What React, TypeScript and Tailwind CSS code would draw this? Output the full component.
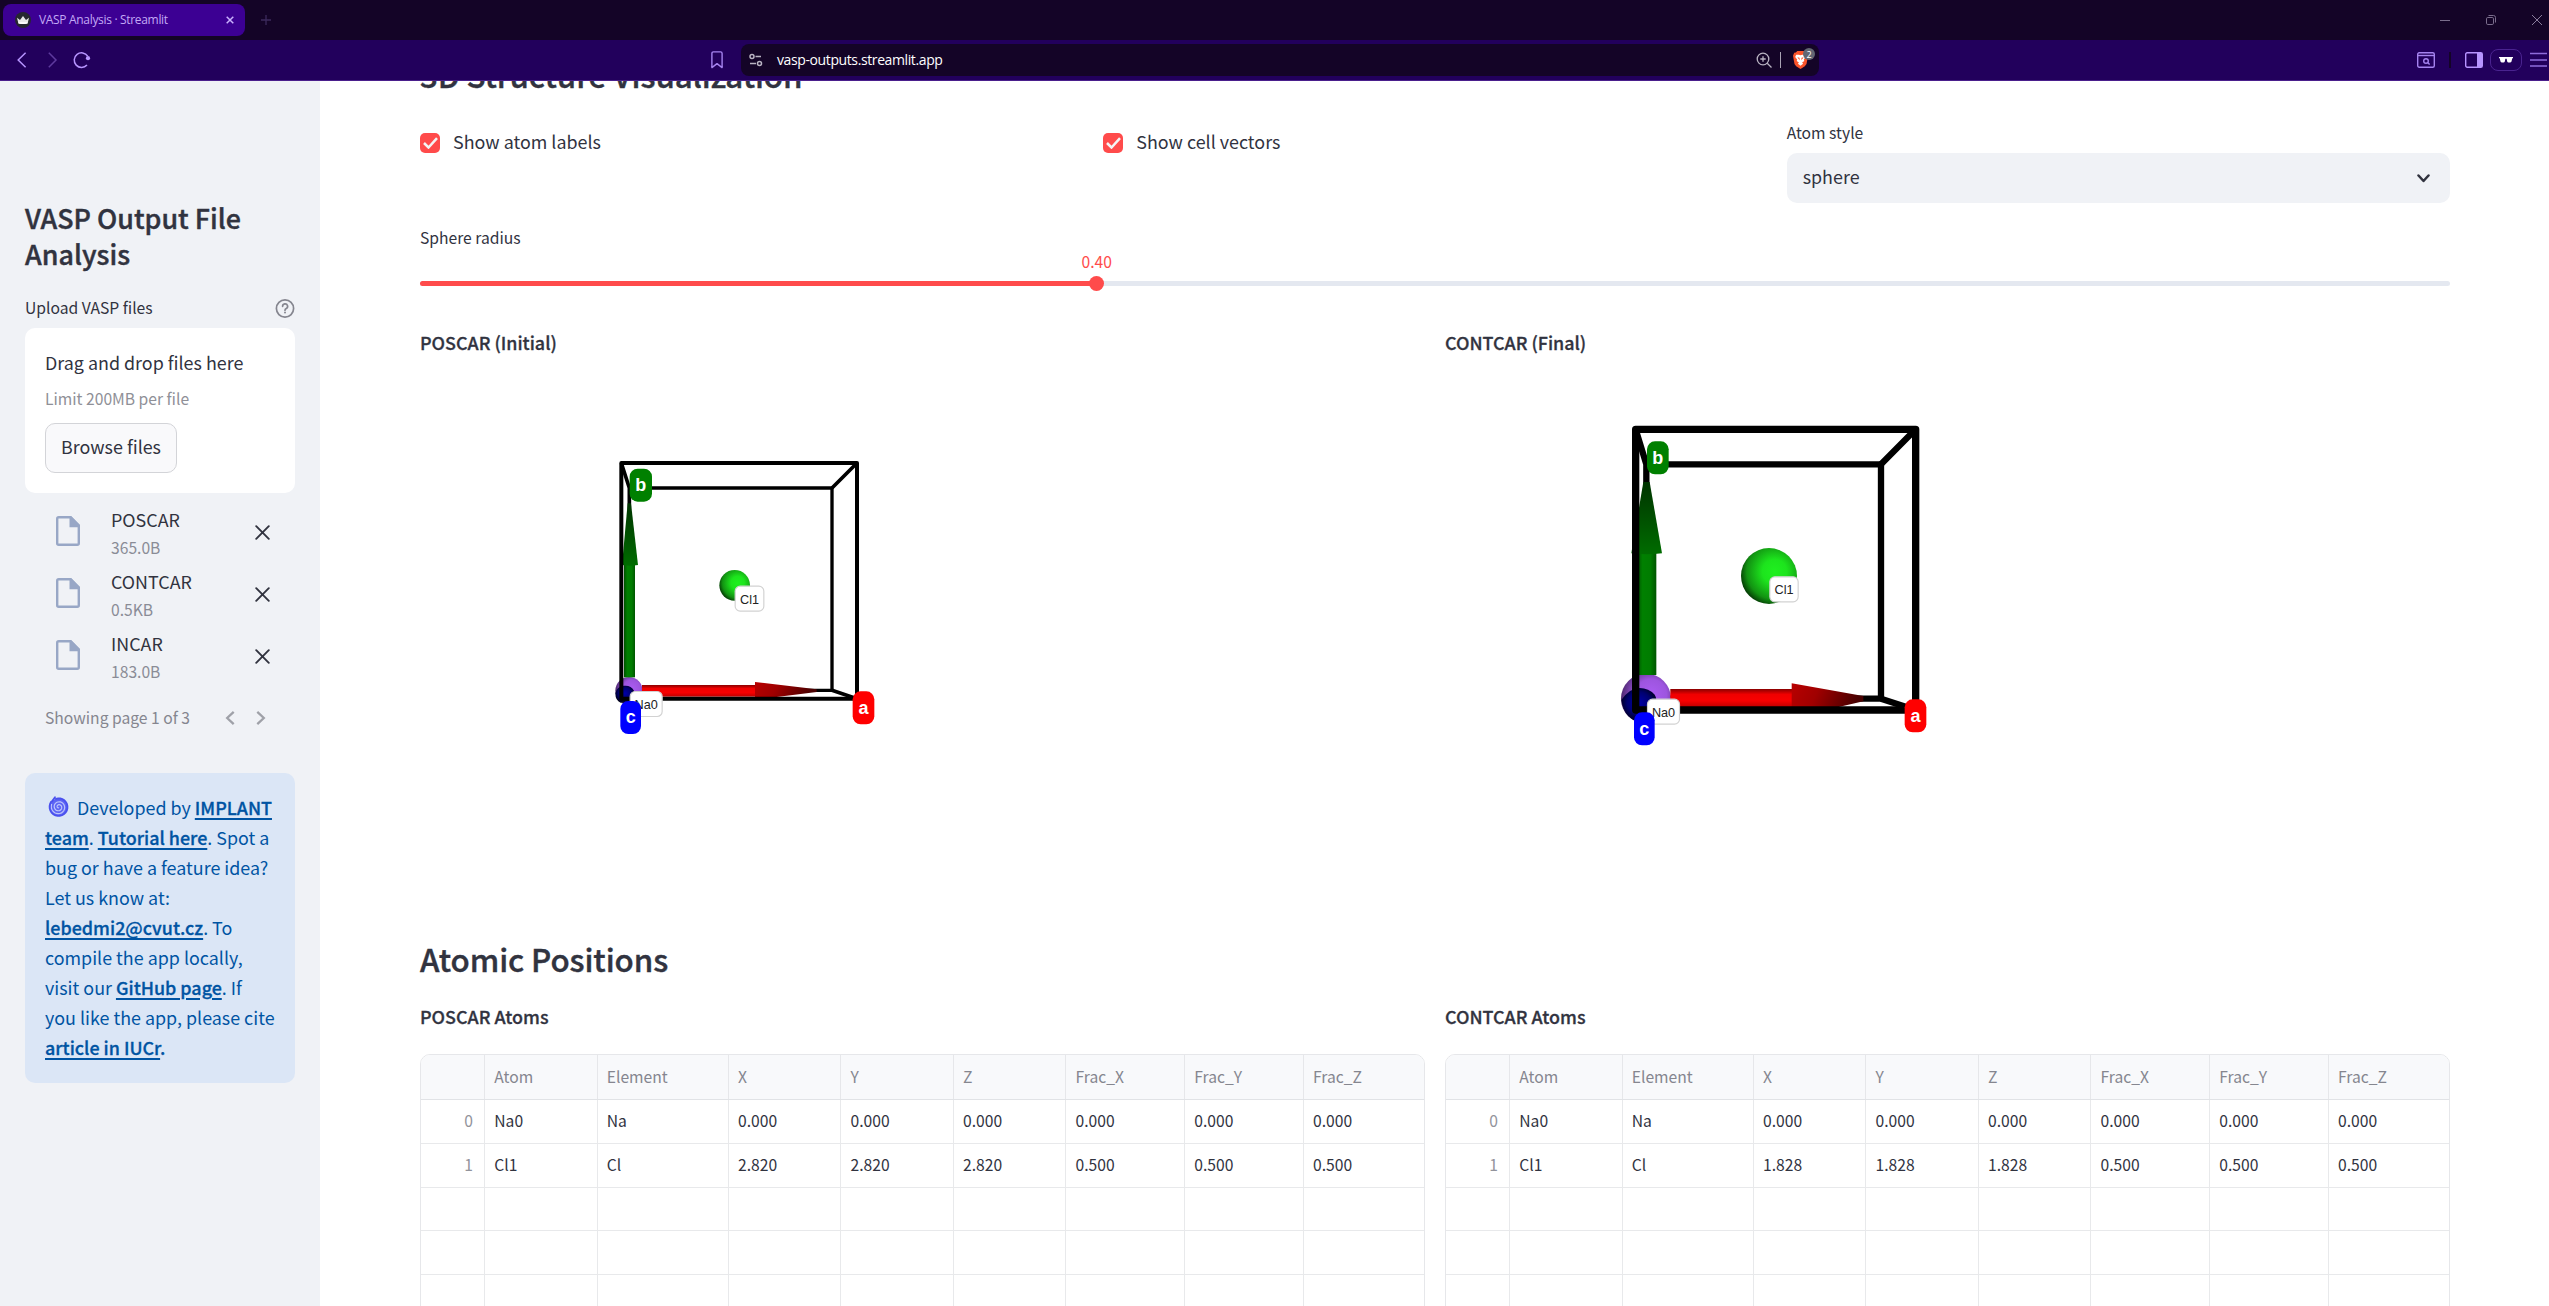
import React from "react";

function TitleBar() {
  return (
    <div className="flex h-10 items-center bg-[#140427] pl-[3px]">
      <div className="flex h-8 w-[242px] items-center rounded-[8px] bg-[#3c0093] pr-[11px] pl-3">
        <svg width="16" height="16" viewBox="0 0 16 16">
          <circle cx="8" cy="8" r="8" fill="#262730" />
          <path d="M2 5.8 5 8 8 4l3 4 3-2.200-1.400 5.700q-4.600 1-9.200 0z" fill="#e8e8e8" />
          <path d="M3.400 10.200h9.200l-.3 1.400q-4.300.8-8.600 0z" fill="#fff" />
        </svg>
        <span className="ml-2 flex-1 whitespace-nowrap font-['Open_Sans',sans-serif] text-[12px] leading-5 tracking-[-0.32px] text-[#c3a9f5]">
          VASP Analysis · Streamlit
        </span>
        <svg width="8" height="8" viewBox="0 0 8 8" stroke="#cbb2ff" strokeWidth="1.500">
          <path d="M.7.7l6.600 6.600M7.300.7.7 7.300" />
        </svg>
      </div>
      <svg className="ml-4" width="10" height="10" viewBox="0 0 10 10" stroke="#3c2a5c" strokeWidth="1.300">
        <path d="M5 0v10M0 5h10" />
      </svg>
      <div className="ml-auto flex items-center gap-9 pr-[7px]">
        <svg width="10" height="10" viewBox="0 0 10 10" stroke="#7a6d8c"><path d="M0 5.500h10" /></svg>
        <svg width="10" height="10" viewBox="0 0 10 10" fill="none" stroke="#7a6d8c">
          <rect x=".5" y="2.500" width="7" height="7" rx="1.300" />
          <path d="M2.500.5h5q2 0 2 2v5" />
        </svg>
        <svg width="10" height="10" viewBox="0 0 10 10" stroke="#8a7d9c"><path d="M0 0l10 10M10 0 0 10" /></svg>
      </div>
    </div>
  );
}

function Toolbar() {
  return (
    <div className="relative z-10 flex h-[41px] shrink-0 items-center border-b border-[#4a1f8c] bg-[#22005c]">
      <div className="flex w-[711px] items-center pl-[17px]">
        <svg width="10" height="16" viewBox="0 0 10 16" fill="none" stroke="#b794ff" strokeWidth="1.500"><path d="M8.600.8 1.200 8l7.400 7.200" /></svg>
        <svg className="ml-[21px]" width="10" height="16" viewBox="0 0 10 16" fill="none" stroke="#5e3a9e" strokeWidth="1.500"><path d="M.8.8 8 8 .8 15.200" /></svg>
        <svg className="ml-[15px]" width="18" height="18" viewBox="0 0 18 18" fill="none" stroke="#b794ff" strokeWidth="1.500">
          <path d="M14.700 5.200A7.300 7.300 0 1 0 14 14" />
          <circle cx="15" cy="7.200" r="2.100" fill="#b794ff" stroke="none" />
        </svg>
      </div>
      <svg width="12" height="18" viewBox="0 0 12 18" fill="none" stroke="#a583ef" strokeWidth="1.400">
        <path d="M.9 16.600V2.400Q.9.9 2.400.9h7.200q1.500 0 1.500 1.500v14.200L6 12.600z" strokeLinejoin="round" />
      </svg>
      <div className="ml-[18px] flex h-8 w-[1078px] items-center rounded-[8px] bg-[#140427] pl-2">
        <svg width="14" height="14" viewBox="0 0 14 14" fill="none" stroke="#b9b3c2" strokeWidth="1.500">
          <circle cx="3" cy="3.500" r="2" /><path d="M6.500 3.500H12M1 10.500h6" /><circle cx="10.500" cy="10.500" r="2" />
        </svg>
        <span className="ml-[14px] whitespace-nowrap font-['Open_Sans',sans-serif] text-[14px] leading-6 tracking-[-0.39px] text-white">
          vasp-outputs.streamlit.app
        </span>
        <svg className="ml-auto" width="16" height="16" viewBox="0 0 16 16" fill="none" stroke="#b9b3c2" strokeWidth="1.300">
          <circle cx="7" cy="7" r="5.800" /><path d="M11.200 11.200 15.500 15.500M7 4.300v5.400M4.300 7h5.400" />
        </svg>
        <div className="ml-2 h-4 w-px bg-[#a9a3b4]" />
        <div className="relative mr-[10px] ml-3 h-[18px] w-[16px]">
          <svg width="15" height="18" viewBox="0 0 15 18">
            <path d="M4.300 0h6.400l1.500 1.600 1.600.2 1.200 3-1.500 8.200-1.700 2.300L7.500 18l-4.300-2.700L1.500 13 0 4.800l1.200-3 1.600-.2z" fill="#fb542b" />
            <path d="M3.200 3.800h2.600l1.700.5 1.700-.5h2.600l1 2.200-2 2.400.5 1.500-2.200 1.500 1 1.400-2.600 1.900-2.600-1.900 1-1.400-2.200-1.500.5-1.500-2-2.400z" fill="#fff" />
            <path d="M4.300 6.200l2.200.5.200 2.600zM10.700 6.200l-2.200.5-.2 2.600z" fill="#fb542b" />
          </svg>
          <div className="absolute -top-[3px] left-[10px] flex h-3 w-3 items-center justify-center rounded-full bg-[#626672] font-['Open_Sans',sans-serif] text-[9px] leading-none text-white">2</div>
        </div>
      </div>
      <div className="ml-auto flex items-center pr-[2px]">
        <svg width="18" height="16" viewBox="0 0 18 16" fill="none" stroke="#a583ef" strokeWidth="1.400">
          <rect x=".7" y=".7" width="16.600" height="14.600" rx="1.500" /><path d="M1 3.500h16" />
          <circle cx="9" cy="9" r="2.300" /><path d="M10.600 10.600l2 2" />
        </svg>
        <div className="ml-[14px] h-4 w-[2px] bg-[#140427]" />
        <svg className="ml-[14px]" width="18" height="16" viewBox="0 0 18 16" fill="none" stroke="#b794ff" strokeWidth="1.400">
          <rect x=".7" y=".7" width="16.600" height="14.600" rx="1.500" /><path d="M12 1h5v14h-5z" fill="#b794ff" stroke="none" />
        </svg>
        <div className="ml-[7px] flex h-[22px] w-8 items-center justify-center rounded-[8px] border border-[#4a2390]">
          <svg width="14" height="6" viewBox="0 0 14 6" fill="#fff"><path d="M0 0h14v1l-.8.600-.7 3q-.4 1-1.500 1H9.500q-1 0-1.300-1L7.600 1.800H6.400L5.800 4.600q-.3 1-1.300 1H3q-1.100 0-1.500-1l-.7-3L0 1z" /></svg>
        </div>
        <svg className="ml-2" width="17" height="16" viewBox="0 0 17 16" stroke="#8f6cdb" strokeWidth="1.700"><path d="M0 1.500h17M0 8h17M0 14h17" /></svg>
      </div>
    </div>
  );
}

function FileRow({ name, size }: { name: string; size: string }) {
  return (
    <div className="flex h-[62px] items-start pr-[25px] pl-[31px]">
      <svg className="mt-[13px]" width="24" height="30" viewBox="0 0 24 30" fill="none" stroke="#98a7c6" strokeWidth="2.400">
        <path d="M14.500 1.200H2.700Q1.200 1.200 1.200 2.700v24.600q0 1.500 1.500 1.500h18.600q1.500 0 1.500-1.500V9.500z" strokeLinejoin="round" />
        <path d="M13.500 0h1.500l9 9v2.300H13.500z" fill="#98a7c6" stroke="none" />
      </svg>
      <div className="ml-[31px] flex-1 pt-px">
        <div className="text-[17.900px] leading-[30px]">{name}</div>
        <div className="text-[15.670px] leading-[27px] text-[#8a8c96]">{size}</div>
      </div>
      <svg className="mt-[22px]" width="15" height="15" viewBox="0 0 15 15" stroke="#31333f" strokeWidth="1.900" strokeLinecap="round">
        <path d="M1.200 1.200l12.600 12.600M13.800 1.200 1.200 13.800" />
      </svg>
    </div>
  );
}

function Link({ children }: { children: React.ReactNode }) {
  return <a className="font-medium underline decoration-2 underline-offset-[3px] [-webkit-text-stroke:0.3px]">{children}</a>;
}

function spiral(cx: number, cy: number, r0: number, r1: number, turns: number, endAngle: number) {
  const steps = Math.round(turns * 24);
  return Array.from({ length: steps + 1 }, (_, i) => {
    const t = i / steps;
    const a = endAngle - (1 - t) * turns * 2 * Math.PI;
    const r = r0 + (r1 - r0) * t;
    return `${i ? "L" : "M"}${(cx + r * Math.cos(a)).toFixed(2)} ${(cy + r * Math.sin(a)).toFixed(2)}`;
  }).join("");
}

function Cyclone() {
  return (
    <svg className="mr-[8px] ml-[3px] inline align-[-2px]" width="21" height="21" viewBox="0 0 21 21" fill="none" strokeLinecap="round">
      <circle cx="10.700" cy="11" r="8.800" fill="#5d64f4" />
      <path d={spiral(10.7, 11, 0.8, 7.6, 2.3, (Math.PI * 2 * 200) / 360)} stroke="#bcc4fb" strokeWidth="1.200" />
      <path d={spiral(10.7, 11, 8.6, 9.2, 0.9, (Math.PI * 2 * 215) / 360)} stroke="#4a50ee" strokeWidth="1.800" />
      <path d="M4 5.400 7 1.300" stroke="#4a50ee" strokeWidth="1.800" />
    </svg>
  );
}

function Sidebar() {
  return (
    <aside className="h-full w-80 shrink-0 bg-[#f0f2f6] px-[25px] pt-[119px]">
      <h2 className="text-[26.860px] leading-9 font-medium [-webkit-text-stroke:0.4px]">VASP Output File<br />Analysis</h2>
      <div className="mt-[23px] flex h-[25px] items-center justify-between">
        <span className="text-[15.670px] leading-[25px]">Upload VASP files</span>
        <svg width="20" height="20" viewBox="0 0 20 20" fill="none" stroke="#85868f" strokeWidth="1.700" strokeLinecap="round">
          <circle cx="10" cy="10.500" r="8.600" />
          <path d="M7.600 8.300a2.500 2.500 0 1 1 3.700 2.200q-1.300.7-1.300 1.700" />
          <path d="M10 14.500v.1" strokeWidth="2" />
        </svg>
      </div>
      <div className="mt-2 h-[165px] rounded-[10px] bg-white px-5 pt-[19px]">
        <div className="text-[17.900px] leading-[30px]">Drag and drop files here</div>
        <div className="mt-[9px] text-[15.670px] leading-[26px] text-[#8f9097]">Limit 200MB per file</div>
        <div className="mt-[11px] flex h-[50px] w-[132px] items-center justify-center rounded-[10px] border border-[#d3d4d8] bg-[#f9f9fb] pb-[3px] text-[17.900px]">
          Browse files
        </div>
      </div>
      <div className="mt-[10px]">
        <FileRow name="POSCAR" size="365.0B" />
        <FileRow name="CONTCAR" size="0.5KB" />
        <FileRow name="INCAR" size="183.0B" />
      </div>
      <div className="mt-[16px] flex h-[26px] items-center px-5 text-[#85868f]">
        <span className="flex-1 text-[15.670px] leading-[26px]">Showing page 1 of 3</span>
        <svg width="10" height="14" viewBox="0 0 10 14" fill="none" stroke="#9fa1a8" strokeWidth="2.300"><path d="M8.700.9 2.200 7l6.500 6.100" /></svg>
        <svg className="mr-[9px] ml-[21px]" width="10" height="14" viewBox="0 0 10 14" fill="none" stroke="#9fa1a8" strokeWidth="2.300"><path d="M1.300.9 7.800 7l-6.500 6.100" /></svg>
      </div>
      <div className="mt-[42px] h-[310px] rounded-[10px] bg-[#dbe6f6] py-[19px] pl-5 text-[17.900px] leading-[30px] whitespace-nowrap text-[#0054a3]">
        <div className="h-[30px]"><Cyclone />Developed by <Link>IMPLANT</Link></div>
        <div><Link>team</Link>. <Link>Tutorial here</Link>. Spot a</div>
        <div>bug or have a feature idea?</div>
        <div>Let us know at:</div>
        <div><Link>lebedmi2@cvut.cz</Link>. To</div>
        <div>compile the app locally,</div>
        <div>visit our <Link>GitHub page</Link>. If</div>
        <div>you like the app, please cite</div>
        <div><Link>article in IUCr</Link><b className="font-medium [-webkit-text-stroke:0.3px]">.</b></div>
      </div>
    </aside>
  );
}

function Checkbox({ label }: { label: string }) {
  return (
    <div className="flex h-[36px] items-start pt-[6px]">
      <div className="mt-[7px] flex h-5 w-5 items-center justify-center rounded-[5px] bg-[#ff4b4b]">
        <svg width="15" height="12" viewBox="0 0 15 12" fill="none" stroke="#f4f4f4" strokeWidth="2.500"><path d="M1 6l4.500 4.500L14 1.200" /></svg>
      </div>
      <span className="ml-[13px] text-[17.900px] leading-[30px]">{label}</span>
    </div>
  );
}

function Gradients() {
  return (
    <svg className="absolute h-0 w-0">
      <defs>
        <radialGradient id="cl" cx=".6" cy=".42" r=".62">
          <stop offset="0" stopColor="#1ff01f" /><stop offset=".35" stopColor="#1de41d" /><stop offset=".8" stopColor="#129312" /><stop offset="1" stopColor="#064006" />
        </radialGradient>
        <radialGradient id="na" cx=".6" cy=".42" r=".62">
          <stop offset="0" stopColor="#ab5cf2" /><stop offset=".5" stopColor="#9d55df" /><stop offset="1" stopColor="#472566" />
        </radialGradient>
        <radialGradient id="cv" cx=".5" cy=".45" r=".55">
          <stop offset="0" stopColor="#0000a8" /><stop offset=".6" stopColor="#000070" /><stop offset="1" stopColor="#000018" />
        </radialGradient>
        <linearGradient id="redShaft" x1="0" y1="0" x2="0" y2="1">
          <stop offset="0" stopColor="#8a0000" /><stop offset=".3" stopColor="#f00000" /><stop offset=".65" stopColor="#f80000" /><stop offset="1" stopColor="#c00000" />
        </linearGradient>
        <linearGradient id="redCone" x1="0" y1="0" x2="1" y2="0.15">
          <stop offset="0" stopColor="#b80000" /><stop offset=".4" stopColor="#a00000" /><stop offset="1" stopColor="#480000" />
        </linearGradient>
        <linearGradient id="greenShaft" x1="0" y1="0" x2="1" y2="0">
          <stop offset="0" stopColor="#005000" /><stop offset=".3" stopColor="#008000" /><stop offset=".7" stopColor="#007c00" /><stop offset="1" stopColor="#005500" />
        </linearGradient>
        <linearGradient id="greenCone" x1="0" y1="0" x2="0" y2="1">
          <stop offset="0" stopColor="#003400" /><stop offset=".5" stopColor="#005000" /><stop offset="1" stopColor="#006c00" />
        </linearGradient>
      </defs>
    </svg>
  );
}

function AxisLabel({ x, y, w, color, text }: { x: number; y: number; w: number; color: string; text: string }) {
  return (
    <g>
      <rect x={x} y={y} width={w} height="99" rx="24" fill={color} />
      <text x={x + w / 2} y={y + 67} textAnchor="middle" fontFamily="Liberation Sans, sans-serif" fontWeight="700" fontSize="54" fill="#fff">{text}</text>
    </g>
  );
}

function AtomLabel({ x, y, w, text }: { x: number; y: number; w: number; text: string }) {
  return (
    <g>
      <rect x={x + 1.5} y={y + 1.5} width={w - 3} height="75" rx="15" fill="#fff" stroke="#d2d2d2" strokeWidth="3.500" />
      <text x={x + w / 2} y={y + 54} textAnchor="middle" fontFamily="Liberation Sans, sans-serif" fontSize="38" fill="#222">{text}</text>
    </g>
  );
}

function PoscarCell() {
  return (
    <svg className="mt-[73px] ml-[170px] block" width="310" height="320" viewBox="0 0 930 960">
      <g fill="none" stroke="#000">
        <path d="M119 174H726V781H118" strokeWidth="10" />
        <path d="M118 240V174L94 99M726 174 801 99M726 781l75 25" strokeWidth="11" />
      </g>
      <circle cx="117" cy="782" r="41" fill="url(#na)" />
      <rect x="102" y="400" width="33" height="342" fill="url(#greenShaft)" />
      <path d="M113 220h10l21 185q-24 4-48 0z" fill="url(#greenCone)" />
      <rect x="156" y="765" width="340" height="35" fill="url(#redShaft)" />
      <path d="M495 756 680 778v8L560 801 495 802z" fill="url(#redCone)" />
      <path d="M76 790a30 28 0 0 1 56-8q6 20-14 36H92Q76 812 76 790z" fill="url(#cv)" />
      <path d="M94 806V99H801V806z" fill="none" stroke="#000" strokeWidth="12" strokeLinejoin="round" />
      <circle cx="434" cy="466" r="46" fill="url(#cl)" />
      <AtomLabel x={434} y={467} w={89} text="Cl1" />
      <AtomLabel x={119} y={783} w={99} text="Na0" />
      <AxisLabel x={119} y={116} w={67} color="#008000" text="b" />
      <AxisLabel x={788} y={784} w={65} color="#ff0000" text="a" />
      <AxisLabel x={91} y={813} w={62} color="#0000ff" text="c" />
    </svg>
  );
}

function ContcarCell() {
  return (
    <svg className="mt-[43px] ml-[155px] block" width="360" height="360" viewBox="0 0 1080 1080">
      <g fill="none" stroke="#000">
        <path d="M139 193H843V896H139" strokeWidth="19" />
        <path d="M139 260V193L107 88M843 193 947 88M843 896l104 34" strokeWidth="19" />
      </g>
      <circle cx="138" cy="896" r="75" fill="url(#na)" />
      <rect x="110" y="455" width="59" height="370" fill="url(#greenShaft)" />
      <path d="M130 246h19l37 214q-46 6-92 0z" fill="url(#greenCone)" />
      <rect x="211" y="867" width="365" height="54" fill="url(#redShaft)" />
      <path d="M575 850 790 888v16L716 921H575z" fill="url(#redCone)" />
      <path d="M64 900q8 50 45 64l40-25q30-30 15-55-18-20-45-20-30 0-55 36z" fill="url(#cv)" />
      <path d="M107 930V88H947V930z" fill="none" stroke="#000" strokeWidth="22" strokeLinejoin="round" />
      <circle cx="507" cy="528" r="84" fill="url(#cl)" />
      <AtomLabel x={508} y={529} w={88} text="Cl1" />
      <AtomLabel x={141} y={896} w={99} text="Na0" />
      <AxisLabel x={141} y={124} w={65} color="#008000" text="b" />
      <AxisLabel x={914} y={898} w={65} color="#ff0000" text="a" />
      <AxisLabel x={102} y={937} w={62} color="#0000ff" text="c" />
    </svg>
  );
}

const headers = ["Atom", "Element", "X", "Y", "Z", "Frac_X", "Frac_Y", "Frac_Z"];

function AtomTable({ rows }: { rows: string[][] }) {
  const all = [...rows, ...Array.from({ length: 3 }, () => Array(9).fill(""))];
  const grid = "grid grid-cols-[64px_112.500px_131.250px_112.500px_112.500px_112.500px_118.750px_118.750px_1fr]";
  return (
    <div className="mt-[23px] h-[270px] overflow-hidden rounded-t-[10px] border border-[#e6e7ea] text-[15.670px]">
      <div className={`${grid} h-[45px] border-b border-[#e1e3e6] bg-[#f8f9fb] text-[#85868f]`}>
        <div className="border-r border-[#e6e7ea]" />
        {headers.map((h) => (
          <div key={h} className="border-r border-[#e6e7ea] pl-[9.250px] leading-[44px] last:border-r-0">{h}</div>
        ))}
      </div>
      {all.map((r, i) => (
        <div key={i} className={`${grid} h-[43.750px] border-b border-[#e8e9eb]`}>
          {r.map((c: string, j: number) => (
            <div key={j} className="border-r border-[#e8e9eb] pl-[9.250px] leading-[41px] first:pr-[11px] first:text-right first:text-[#92939b] last:border-r-0">{c}</div>
          ))}
        </div>
      ))}
    </div>
  );
}

function Main() {
  return (
    <main className="h-full flex-1 overflow-hidden bg-white pr-[99px] pl-[100px]">
      <h3 className="mt-[-27px] text-[31.300px] leading-[42px] font-medium tracking-[-0.1px] [-webkit-text-stroke:0.4px]">3D Structure Visualization</h3>
      <div className="mt-6 grid grid-cols-3 gap-5">
        <Checkbox label="Show atom labels" />
        <Checkbox label="Show cell vectors" />
        <div>
          <div className="text-[15.670px] leading-[25px]">Atom style</div>
          <div className="mt-2 flex h-[50px] items-center justify-between rounded-[10px] bg-[#f0f2f6] pr-5 pl-4 text-[17.900px]">
            <span className="pb-[4px]">sphere</span>
            <svg width="13" height="9" viewBox="0 0 13 9" fill="none" stroke="#31333f" strokeWidth="2.500" strokeLinecap="round" strokeLinejoin="round"><path d="M1.500 1.500l5 5.500 5-5.500" /></svg>
          </div>
        </div>
      </div>
      <div className="mt-[22px] text-[15.670px] leading-[25px]">Sphere radius</div>
      <div className="relative mt-[31px] h-[5px] rounded-full bg-[#e4e8f0]">
        <div className="h-full w-1/3 rounded-full bg-[#ff4b4b]" />
        <div className="absolute -top-[5px] left-[669px] h-[15px] w-[15px] rounded-full bg-[#ff4b4b]" />
        <div className="absolute -top-[32px] left-[661.500px] text-[15.670px] leading-[25px] text-[#ff4b4b]">0.40</div>
      </div>
      <div className="mt-[41px] grid h-[611px] grid-cols-2 gap-5">
        <div><div className="text-[17.900px] leading-[30px] font-medium [-webkit-text-stroke:0.3px]">POSCAR (Initial)</div><PoscarCell /></div>
        <div><div className="text-[17.900px] leading-[30px] font-medium [-webkit-text-stroke:0.3px]">CONTCAR (Final)</div><ContcarCell /></div>
      </div>
      <h3 className="text-[31.300px] leading-[42px] font-medium tracking-[-0.1px] [-webkit-text-stroke:0.4px]">Atomic Positions</h3>
      <div className="mt-[21px] grid grid-cols-2 gap-5">
        <div>
          <div className="text-[17.900px] leading-[30px] font-medium [-webkit-text-stroke:0.3px]">POSCAR Atoms</div>
          <AtomTable rows={[
            ["0", "Na0", "Na", "0.000", "0.000", "0.000", "0.000", "0.000", "0.000"],
            ["1", "Cl1", "Cl", "2.820", "2.820", "2.820", "0.500", "0.500", "0.500"],
          ]} />
        </div>
        <div>
          <div className="text-[17.900px] leading-[30px] font-medium [-webkit-text-stroke:0.3px]">CONTCAR Atoms</div>
          <AtomTable rows={[
            ["0", "Na0", "Na", "0.000", "0.000", "0.000", "0.000", "0.000", "0.000"],
            ["1", "Cl1", "Cl", "1.828", "1.828", "1.828", "0.500", "0.500", "0.500"],
          ]} />
        </div>
      </div>
    </main>
  );
}

export default function App() {
  return (
    <div className="flex h-[1306px] w-[2549px] flex-col overflow-hidden bg-white font-['Noto_Sans_CJK_SC','Open_Sans',sans-serif] text-[#31333f]">
      <Gradients />
      <TitleBar />
      <Toolbar />
      <div className="flex min-h-0 flex-1">
        <Sidebar />
        <Main />
      </div>
    </div>
  );
}
